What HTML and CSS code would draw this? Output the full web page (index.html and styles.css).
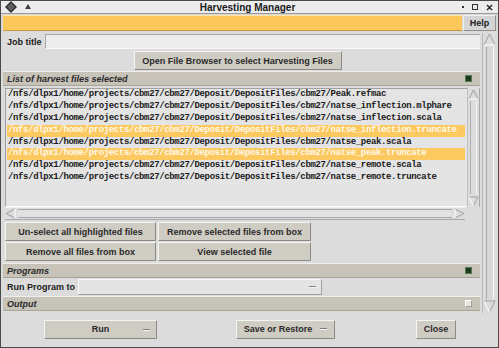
FILE: index.html
```html
<!DOCTYPE html>
<html>
<head>
<meta charset="utf-8">
<link rel="stylesheet" href="styles.css">
</head>
<body>
<div class="window">
  <div class="titlebar">
    <div class="tb-left">
      <svg width="12" height="12" viewBox="0 0 12 12"><polygon points="6,0 12,6 6,12 0,6" fill="#303030"/><polygon points="6,2 10,6 6,10 2,6" fill="#606060"/></svg>
      <svg width="8" height="8" viewBox="0 0 8 8"><polygon points="4,1 7,6 1,6" fill="#404040"/></svg>
    </div>
    <div class="tb-title">Harvesting Manager</div>
    <div class="tb-right">
      <span class="tb-dot"></span>
      <span class="tb-sq"></span>
      <svg width="7" height="7" viewBox="0 0 7 7"><path d="M1,1 L6,6 M6,1 L1,6" stroke="#303030" stroke-width="1.6"/></svg>
    </div>
  </div>
  <div class="menubar">
    <div class="menu-yellow"></div>
    <div class="help">Help</div>
  </div>
  <div class="main">
    <div class="content">
      <div class="job-row">
        <div class="label">Job title</div>
        <div class="field"></div>
      </div>
      <div class="browse-row">
        <div class="btn browse">Open File Browser to select Harvesting Files</div>
      </div>
      <div class="section">
        <span>List of harvest files selected</span>
        <span class="ind on"></span>
      </div>
      <div class="listwrap">
        <div class="listbox">
          <div class="row">/nfs/dlpx1/home/projects/cbm27/cbm27/Deposit/DepositFiles/cbm27/Peak.refmac</div>
          <div class="row">/nfs/dlpx1/home/projects/cbm27/cbm27/Deposit/DepositFiles/cbm27/natse_inflection.mlphare</div>
          <div class="row">/nfs/dlpx1/home/projects/cbm27/cbm27/Deposit/DepositFiles/cbm27/natse_inflection.scala</div>
          <div class="row sel">/nfs/dlpx1/home/projects/cbm27/cbm27/Deposit/DepositFiles/cbm27/natse_inflection.truncate</div>
          <div class="row">/nfs/dlpx1/home/projects/cbm27/cbm27/Deposit/DepositFiles/cbm27/natse_peak.scala</div>
          <div class="row sel">/nfs/dlpx1/home/projects/cbm27/cbm27/Deposit/DepositFiles/cbm27/natse_peak.truncate</div>
          <div class="row">/nfs/dlpx1/home/projects/cbm27/cbm27/Deposit/DepositFiles/cbm27/natse_remote.scala</div>
          <div class="row">/nfs/dlpx1/home/projects/cbm27/cbm27/Deposit/DepositFiles/cbm27/natse_remote.truncate</div>
        </div>
        <div class="vscroll">
          <svg class="arr" width="11" height="11" viewBox="0 0 11 11"><path d="M1,10 L5.5,1 L10,10" fill="none" stroke="#a0a0a0"/><path d="M1,10 H10" stroke="#ffffff"/></svg>
          <div class="trough"></div>
          <svg class="arr" width="11" height="11" viewBox="0 0 11 11"><path d="M1,1 H10 L5.5,10" fill="none" stroke="#a0a0a0"/><path d="M1,1 L5.5,10" stroke="#ffffff"/></svg>
        </div>
      </div>
      <div class="hscroll">
        <svg width="11" height="11" viewBox="0 0 11 11"><path d="M10,1 L1,5.5 L10,10" fill="none" stroke="#a0a0a0"/><path d="M10,1 V10" stroke="#ffffff"/></svg>
        <div class="htrough"></div>
        <svg width="11" height="11" viewBox="0 0 11 11"><path d="M1,1 L10,5.5 L1,10" fill="none" stroke="#a0a0a0"/><path d="M1,1 V10" stroke="#ffffff"/></svg>
      </div>
      <div class="btngrid">
        <div class="btn">Un-select all highlighted files</div>
        <div class="btn">Remove selected files from box</div>
        <div class="btn">Remove all files from box</div>
        <div class="btn">View selected file</div>
      </div>
      <div class="section">
        <span>Programs</span>
        <span class="ind on"></span>
      </div>
      <div class="run-row">
        <div class="label">Run Program to</div>
        <div class="combo"><span class="dash"></span></div>
      </div>
      <div class="section">
        <span>Output</span>
        <span class="ind off"></span>
      </div>
    </div>
    <div class="outer-scroll">
      <svg class="arr" width="13" height="13" viewBox="0 0 13 13"><path d="M1,12 L6.5,1 L12,12" fill="none" stroke="#a0a0a0"/><path d="M1,12 H12" stroke="#ffffff"/></svg>
      <div class="otrough"></div>
      <svg class="arr" width="13" height="13" viewBox="0 0 13 13"><path d="M1,1 H12 L6.5,12" fill="none" stroke="#a0a0a0"/><path d="M1,1 L6.5,12" stroke="#ffffff"/></svg>
    </div>
  </div>
  <div class="footer">
    <div class="btn fbtn run">Run <span class="dash"></span></div>
    <div class="btn fbtn save">Save or Restore <span class="dash"></span></div>
    <div class="btn fbtn close">Close</div>
  </div>
</div>
</body>
</html>
```

FILE: styles.css
```css
* { box-sizing: border-box; }
html, body { margin: 0; padding: 0; }
body {
  width: 499px;
  height: 348px;
  overflow: hidden;
  background: #dcdcdc;
  font-family: "Liberation Sans", Arial, sans-serif;
  font-size: 9px;
  font-weight: bold;
  color: #202020;
}
.window {
  width: 499px;
  height: 348px;
  border: 1px solid #4a4a4a;
  background: #dcdcdc;
  display: flex;
  flex-direction: column;
}
.titlebar {
  height: 13px;
  background: #ececec;
  border-bottom: 1px solid #9a9a9a;
  display: flex;
  align-items: center;
  padding: 0 3px 0 3px;
}
.tb-left { width: 60px; display: flex; align-items: center; gap: 7px; padding-left: 1px; }
.tb-title { flex: 1; text-align: center; font-size: 10px; color: #1a1a1a; padding-right: 4px; }
.tb-right { width: 60px; display: flex; align-items: center; justify-content: flex-end; gap: 8px; padding-right: 2px; }
.tb-dot { width: 2px; height: 2px; background: #303030; }
.tb-sq { width: 6px; height: 6px; border: 1px solid #303030; }
.menubar {
  height: 18px;
  display: flex;
  padding: 1px 2px 1px 2px;
  gap: 1px;
  background: #d8d8d8;
}
.menu-yellow {
  flex: 1;
  background: #fcc85c;
  border-top: 1px solid #fde4a8;
  border-bottom: 1px solid #c89838;
}
.help {
  width: 33px;
  display: flex;
  align-items: center;
  justify-content: center;
  background: #d4d4d4;
  border-top: 1px solid #f0f0f0;
  border-left: 1px solid #f0f0f0;
  border-bottom: 1px solid #909090;
  border-right: 1px solid #909090;
}
.main {
  flex: 1;
  display: flex;
  padding: 1px 1px 0 2px;
}
.content {
  flex: 1;
  display: flex;
  flex-direction: column;
}
.job-row {
  height: 16px;
  display: flex;
  align-items: stretch;
  padding: 1px 0 0 0;
}
.label { padding: 0 2px 0 4px; display: flex; align-items: center; white-space: nowrap; }
.field {
  flex: 1;
  background: #ececec;
  border-top: 1px solid #a8a8a8;
  border-left: 1px solid #a8a8a8;
  border-bottom: 1px solid #f8f8f8;
  margin-left: 1px;
}
.browse-row {
  height: 22px;
  display: flex;
  justify-content: center;
  align-items: center;
  padding-right: 8px;
  padding-top: 1px;
}
.btn {
  background: #cfccc4;
  border-top: 1px solid #f4f4f0;
  border-left: 1px solid #f4f4f0;
  border-bottom: 1px solid #8c8a84;
  border-right: 1px solid #8c8a84;
  display: flex;
  align-items: center;
  justify-content: center;
  white-space: nowrap;
  color: #2a2a2a;
}
.browse { width: 208px; height: 19px; }
.section {
  height: 15px;
  background: #c7c3b8;
  border-top: 1px solid #eeeeea;
  border-bottom: 1px solid #a8a498;
  font-style: italic;
  display: flex;
  align-items: center;
  justify-content: space-between;
  padding: 0 8px 0 4px;
  color: #2a2a2a;
}
.ind { width: 7px; height: 7px; }
.ind.on { background: #1c3c1c; border: 1px solid #5a7a5a; }
.ind.off { background: #e8e6e0; border-top: 1px solid #ffffff; border-left: 1px solid #ffffff; border-bottom: 1px solid #a0a0a0; border-right: 1px solid #a0a0a0; }
.listwrap {
  height: 121px;
  display: flex;
  padding: 2px 0 0 2px;
}
.listbox {
  flex: 1;
  background: #e4e4e4;
  border-top: 1px solid #a0a0a0;
  border-left: 1px solid #a0a0a0;
  border-bottom: 1px solid #ffffff;
  padding: 0 2px 0 1px;
  overflow: hidden;
}
.row {
  height: 11.9px;
  line-height: 11.9px;
  padding-left: 1px;
  font-family: "Liberation Mono", "DejaVu Sans Mono", monospace;
  font-size: 9px;
  letter-spacing: -0.36px;
  font-weight: bold;
  color: #1a1a1a;
  white-space: nowrap;
}
.row.sel { background: #fcc860; color: #fff8e8; }
.vscroll {
  width: 13px;
  display: flex;
  flex-direction: column;
  background: #dcdcdc;
  border-left: 1px solid #c0c0c0;
  border-right: 1px solid #a8a8a8;
}
.vscroll .arr { display: block; margin: 1px 0 0 0; }
.trough { flex: 1; border-left: 1px solid #b0b0b0; border-right: 1px solid #f4f4f4; margin: 1px 2px; }
.hscroll {
  height: 13px;
  display: flex;
  align-items: center;
  margin: 0 15px 0 2px;
  border-top: 1px solid #f0f0f0;
  border-bottom: 1px solid #a8a8a8;
  background: #dcdcdc;
}
.htrough { flex: 1; height: 9px; border-top: 1px solid #a8a8a8; border-bottom: 1px solid #a8a8a8; margin: 0 2px; background: #e2e2e2; }
.btngrid {
  display: grid;
  grid-template-columns: 151px 153px;
  grid-auto-rows: 19px;
  gap: 1px 2px;
  padding: 2px 0 2px 2px;
}
.run-row {
  height: 18px;
  display: flex;
  align-items: stretch;
  padding: 1px 0 1px 0;
}
.combo {
  width: 244px;
  margin-left: 1px;
  background: #e4e4e4;
  border-top: 1px solid #f8f8f8;
  border-left: 1px solid #f8f8f8;
  border-bottom: 1px solid #a0a0a0;
  border-right: 1px solid #a0a0a0;
  display: flex;
  align-items: center;
  justify-content: flex-end;
  padding-right: 5px;
}
.dash { display: inline-block; width: 7px; height: 2px; background: #808080; border-bottom: 1px solid #f4f4f4; }
.outer-scroll {
  width: 15px;
  display: flex;
  flex-direction: column;
  margin-left: 2px;
  border-left: 1px solid #b8b8b8;
  background: #dcdcdc;
}
.outer-scroll .arr { display: block; }
.otrough { flex: 1; margin: 1px 3px; border-left: 1px solid #a8a8a8; border-right: 1px solid #f8f8f8; background: #d8d8d8; }
.footer {
  height: 34px;
  display: flex;
  align-items: center;
  padding: 0 0 2px 43px;
  background: #dcdcdc;
}
.fbtn { height: 19px; }
.run { width: 113px; position: relative; justify-content: center; }
.save { width: 99px; margin-left: 79px; }
.close { width: 40px; margin-left: 81px; }
.fbtn .dash { margin-left: 0; }
.run .dash { position: absolute; right: 6px; top: 8px; }
.save .dash { margin-left: 8px; }
```
